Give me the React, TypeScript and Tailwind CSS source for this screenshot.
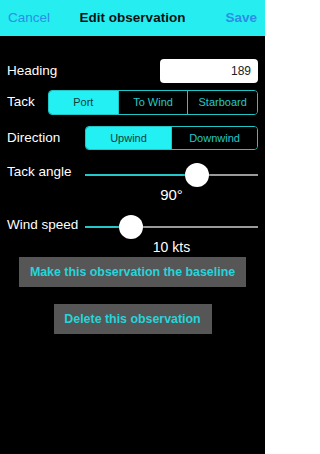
import React from "react"

const font = { fontFamily: '"Liberation Sans", Arial, sans-serif' }

function Segmented({ items, selected, width }: { items: string[]; selected: number; width: string }) {
  return (
    <div className={`flex h-full ${width} rounded-[4px] border border-[#1fc6c8] overflow-hidden`}>
      {items.map((item, i) => (
        <div
          key={item}
          className={`flex-1 flex items-center justify-center text-[11px] ${
            i > 0 ? "border-l border-[#1fc6c8]" : ""
          } ${i === selected ? "bg-[#22f0f2] text-[#143a3c]" : "bg-black text-[#22c8cb]"}`}
        >
          {item}
        </div>
      ))}
    </div>
  )
}

function Slider({ thumbLeft }: { thumbLeft: number }) {
  return (
    <div className="relative w-[173px] h-[24px]">
      <div className="absolute left-0 right-0 top-[11px] h-[2px] bg-[#9a9a9a]" />
      <div className="absolute left-0 top-[11px] h-[2px] bg-[#25c8ca]" style={{ width: thumbLeft + 12 }} />
      <div
        className="absolute top-0 w-[24px] h-[24px] rounded-full bg-white shadow-[0_1px_3px_rgba(0,0,0,0.4)]"
        style={{ left: thumbLeft }}
      />
    </div>
  )
}

export default function App() {
  return (
    <div className="w-[265px] h-[454px] bg-black text-white flex flex-col" style={font}>
      <header className="h-[36px] bg-[#26eef0] grid grid-cols-[1fr_auto_1fr] items-center px-[8px] text-[13.5px]">
        <span className="text-[#2a8de6]">Cancel</span>
        <span className="font-bold text-[#111]">Edit observation</span>
        <span className="text-[#2a8de6] font-bold text-right">Save</span>
      </header>

      <div className="mt-[23px] h-[24px] flex items-center justify-between px-[7px]">
        <span className="text-[13.5px]">Heading</span>
        <div className="w-[98px] h-full bg-white rounded-[4px] flex items-center justify-end pr-[7px] text-[12px] text-[#222]">
          189
        </div>
      </div>

      <div className="mt-[7px] h-[25px] flex items-center justify-between px-[7px]">
        <span className="text-[13.5px]">Tack</span>
        <Segmented items={["Port", "To Wind", "Starboard"]} selected={0} width="w-[210px]" />
      </div>

      <div className="mt-[11px] h-[24px] flex items-center justify-between px-[7px]">
        <span className="text-[13.5px]">Direction</span>
        <Segmented items={["Upwind", "Downwind"]} selected={0} width="w-[173px]" />
      </div>

      <div className="mt-[13px] h-[24px] flex items-start justify-between px-[7px]">
        <span className="text-[13.5px] leading-[16px] mt-[1px]">Tack angle</span>
        <Slider thumbLeft={100} />
      </div>
      <div className="pl-[85px]">
        <div className="w-[173px] text-center text-[15px] leading-[16px]">90°</div>
      </div>

      <div className="mt-[12px] h-[24px] flex items-start justify-between px-[7px]">
        <span className="text-[13.5px] leading-[16px] mt-[2px]">Wind speed</span>
        <Slider thumbLeft={34} />
      </div>
      <div className="pl-[85px]">
        <div className="w-[173px] text-center text-[14px] leading-[16px]">10 kts</div>
      </div>

      <div className="mt-[2px] flex justify-center">
        <div className="w-[227px] h-[30px] bg-[#565656] flex items-center justify-center text-[12.4px] font-bold text-[#26d4da]">
          Make this observation the baseline
        </div>
      </div>
      <div className="mt-[17px] flex justify-center">
        <div className="w-[158px] h-[30px] bg-[#565656] flex items-center justify-center text-[12.4px] font-bold text-[#26d4da]">
          Delete this observation
        </div>
      </div>
    </div>
  )
}
